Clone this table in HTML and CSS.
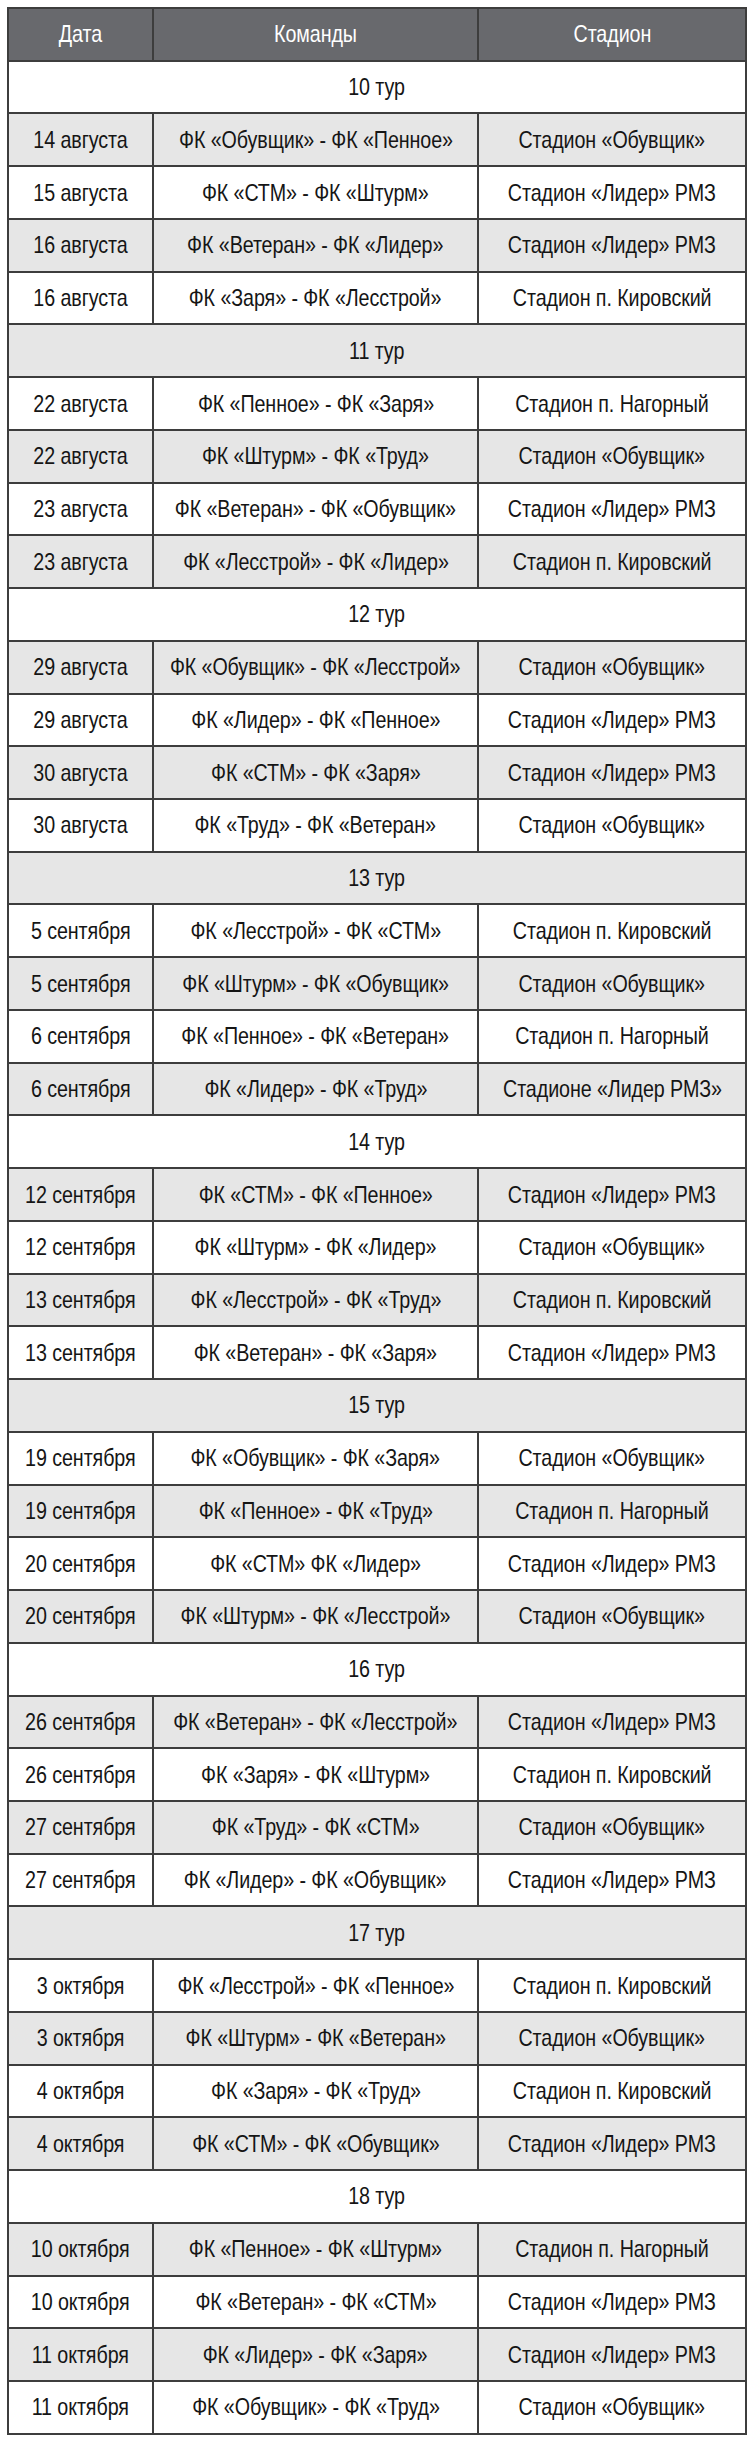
FILE: index.html
```html
<!DOCTYPE html>
<html lang="ru">
<head>
<meta charset="utf-8">
<title>Расписание</title>
<link rel="stylesheet" href="styles.css">
</head>
<body>
<div class="table">
  <div class="row head"><div class="c"><span>Дата</span></div><div class="c"><span>Команды</span></div><div class="c"><span>Стадион</span></div></div>
  <div class="row tour w"><div class="c"><span>10 тур</span></div></div>
  <div class="row g"><div class="c"><span>14 августа</span></div><div class="c"><span>ФК «Обувщик» - ФК «Пенное»</span></div><div class="c"><span>Стадион «Обувщик»</span></div></div>
  <div class="row w"><div class="c"><span>15 августа</span></div><div class="c"><span>ФК «СТМ» - ФК «Штурм»</span></div><div class="c"><span>Стадион «Лидер» РМЗ</span></div></div>
  <div class="row g"><div class="c"><span>16 августа</span></div><div class="c"><span>ФК «Ветеран» - ФК «Лидер»</span></div><div class="c"><span>Стадион «Лидер» РМЗ</span></div></div>
  <div class="row w"><div class="c"><span>16 августа</span></div><div class="c"><span>ФК «Заря» - ФК «Лесстрой»</span></div><div class="c"><span>Стадион п. Кировский</span></div></div>
  <div class="row tour g"><div class="c"><span>11 тур</span></div></div>
  <div class="row w"><div class="c"><span>22 августа</span></div><div class="c"><span>ФК «Пенное» - ФК «Заря»</span></div><div class="c"><span>Стадион п. Нагорный</span></div></div>
  <div class="row g"><div class="c"><span>22 августа</span></div><div class="c"><span>ФК «Штурм» - ФК «Труд»</span></div><div class="c"><span>Стадион «Обувщик»</span></div></div>
  <div class="row w"><div class="c"><span>23 августа</span></div><div class="c"><span>ФК «Ветеран» - ФК «Обувщик»</span></div><div class="c"><span>Стадион «Лидер» РМЗ</span></div></div>
  <div class="row g"><div class="c"><span>23 августа</span></div><div class="c"><span>ФК «Лесстрой» - ФК «Лидер»</span></div><div class="c"><span>Стадион п. Кировский</span></div></div>
  <div class="row tour w"><div class="c"><span>12 тур</span></div></div>
  <div class="row g"><div class="c"><span>29 августа</span></div><div class="c"><span>ФК «Обувщик» - ФК «Лесстрой»</span></div><div class="c"><span>Стадион «Обувщик»</span></div></div>
  <div class="row w"><div class="c"><span>29 августа</span></div><div class="c"><span>ФК «Лидер» - ФК «Пенное»</span></div><div class="c"><span>Стадион «Лидер» РМЗ</span></div></div>
  <div class="row g"><div class="c"><span>30 августа</span></div><div class="c"><span>ФК «СТМ» - ФК «Заря»</span></div><div class="c"><span>Стадион «Лидер» РМЗ</span></div></div>
  <div class="row w"><div class="c"><span>30 августа</span></div><div class="c"><span>ФК «Труд» - ФК «Ветеран»</span></div><div class="c"><span>Стадион «Обувщик»</span></div></div>
  <div class="row tour g"><div class="c"><span>13 тур</span></div></div>
  <div class="row w"><div class="c"><span>5 сентября</span></div><div class="c"><span>ФК «Лесстрой» - ФК «СТМ»</span></div><div class="c"><span>Стадион п. Кировский</span></div></div>
  <div class="row g"><div class="c"><span>5 сентября</span></div><div class="c"><span>ФК «Штурм» - ФК «Обувщик»</span></div><div class="c"><span>Стадион «Обувщик»</span></div></div>
  <div class="row w"><div class="c"><span>6 сентября</span></div><div class="c"><span>ФК «Пенное» - ФК «Ветеран»</span></div><div class="c"><span>Стадион п. Нагорный</span></div></div>
  <div class="row g"><div class="c"><span>6 сентября</span></div><div class="c"><span>ФК «Лидер» - ФК «Труд»</span></div><div class="c"><span>Стадионе «Лидер РМЗ»</span></div></div>
  <div class="row tour w"><div class="c"><span>14 тур</span></div></div>
  <div class="row g"><div class="c"><span>12 сентября</span></div><div class="c"><span>ФК «СТМ» - ФК «Пенное»</span></div><div class="c"><span>Стадион «Лидер» РМЗ</span></div></div>
  <div class="row w"><div class="c"><span>12 сентября</span></div><div class="c"><span>ФК «Штурм» - ФК «Лидер»</span></div><div class="c"><span>Стадион «Обувщик»</span></div></div>
  <div class="row g"><div class="c"><span>13 сентября</span></div><div class="c"><span>ФК «Лесстрой» - ФК «Труд»</span></div><div class="c"><span>Стадион п. Кировский</span></div></div>
  <div class="row w"><div class="c"><span>13 сентября</span></div><div class="c"><span>ФК «Ветеран» - ФК «Заря»</span></div><div class="c"><span>Стадион «Лидер» РМЗ</span></div></div>
  <div class="row tour g"><div class="c"><span>15 тур</span></div></div>
  <div class="row w"><div class="c"><span>19 сентября</span></div><div class="c"><span>ФК «Обувщик» - ФК «Заря»</span></div><div class="c"><span>Стадион «Обувщик»</span></div></div>
  <div class="row g"><div class="c"><span>19 сентября</span></div><div class="c"><span>ФК «Пенное» - ФК «Труд»</span></div><div class="c"><span>Стадион п. Нагорный</span></div></div>
  <div class="row w"><div class="c"><span>20 сентября</span></div><div class="c"><span>ФК «СТМ» ФК «Лидер»</span></div><div class="c"><span>Стадион «Лидер» РМЗ</span></div></div>
  <div class="row g"><div class="c"><span>20 сентября</span></div><div class="c"><span>ФК «Штурм» - ФК «Лесстрой»</span></div><div class="c"><span>Стадион «Обувщик»</span></div></div>
  <div class="row tour w"><div class="c"><span>16 тур</span></div></div>
  <div class="row g"><div class="c"><span>26 сентября</span></div><div class="c"><span>ФК «Ветеран» - ФК «Лесстрой»</span></div><div class="c"><span>Стадион «Лидер» РМЗ</span></div></div>
  <div class="row w"><div class="c"><span>26 сентября</span></div><div class="c"><span>ФК «Заря» - ФК «Штурм»</span></div><div class="c"><span>Стадион п. Кировский</span></div></div>
  <div class="row g"><div class="c"><span>27 сентября</span></div><div class="c"><span>ФК «Труд» - ФК «СТМ»</span></div><div class="c"><span>Стадион «Обувщик»</span></div></div>
  <div class="row w"><div class="c"><span>27 сентября</span></div><div class="c"><span>ФК «Лидер» - ФК «Обувщик»</span></div><div class="c"><span>Стадион «Лидер» РМЗ</span></div></div>
  <div class="row tour g"><div class="c"><span>17 тур</span></div></div>
  <div class="row w"><div class="c"><span>3 октября</span></div><div class="c"><span>ФК «Лесстрой» - ФК «Пенное»</span></div><div class="c"><span>Стадион п. Кировский</span></div></div>
  <div class="row g"><div class="c"><span>3 октября</span></div><div class="c"><span>ФК «Штурм» - ФК «Ветеран»</span></div><div class="c"><span>Стадион «Обувщик»</span></div></div>
  <div class="row w"><div class="c"><span>4 октября</span></div><div class="c"><span>ФК «Заря» - ФК «Труд»</span></div><div class="c"><span>Стадион п. Кировский</span></div></div>
  <div class="row g"><div class="c"><span>4 октября</span></div><div class="c"><span>ФК «СТМ» - ФК «Обувщик»</span></div><div class="c"><span>Стадион «Лидер» РМЗ</span></div></div>
  <div class="row tour w"><div class="c"><span>18 тур</span></div></div>
  <div class="row g"><div class="c"><span>10 октября</span></div><div class="c"><span>ФК «Пенное» - ФК «Штурм»</span></div><div class="c"><span>Стадион п. Нагорный</span></div></div>
  <div class="row w"><div class="c"><span>10 октября</span></div><div class="c"><span>ФК «Ветеран» - ФК «СТМ»</span></div><div class="c"><span>Стадион «Лидер» РМЗ</span></div></div>
  <div class="row g"><div class="c"><span>11 октября</span></div><div class="c"><span>ФК «Лидер» - ФК «Заря»</span></div><div class="c"><span>Стадион «Лидер» РМЗ</span></div></div>
  <div class="row w"><div class="c"><span>11 октября</span></div><div class="c"><span>ФК «Обувщик» - ФК «Труд»</span></div><div class="c"><span>Стадион «Обувщик»</span></div></div>
</div>
</body>
</html>
```
FILE: styles.css
```css
html, body {
  margin: 0;
  padding: 0;
  background: #ffffff;
}
body {
  padding: 7px 3px 3px 7px;
  font-family: "Liberation Sans", Arial, sans-serif;
  font-size: 24px;
  color: #151515;
}
.table {
  box-sizing: border-box;
  width: 740px;
  height: 2428px;
  padding: 2px;
  background: #3d3d3d;
  display: flex;
  flex-direction: column;
  gap: 2px;
}
.row {
  flex: 1 1 0;
  display: grid;
  grid-template-columns: 143px 323px 266px;
  gap: 2px;
  min-height: 0;
}
.row.tour {
  grid-template-columns: 1fr;
}
.c {
  display: flex;
  align-items: center;
  justify-content: center;
  white-space: nowrap;
  overflow: visible;
  min-width: 0;
}
.c span {
  display: inline-block;
  transform: scaleX(0.82);
  letter-spacing: -0.1px;
}
.g .c { background: #e6e6e6; }
.w .c { background: #ffffff; }
.head .c {
  background: #68696d;
  color: #ffffff;
}
```
